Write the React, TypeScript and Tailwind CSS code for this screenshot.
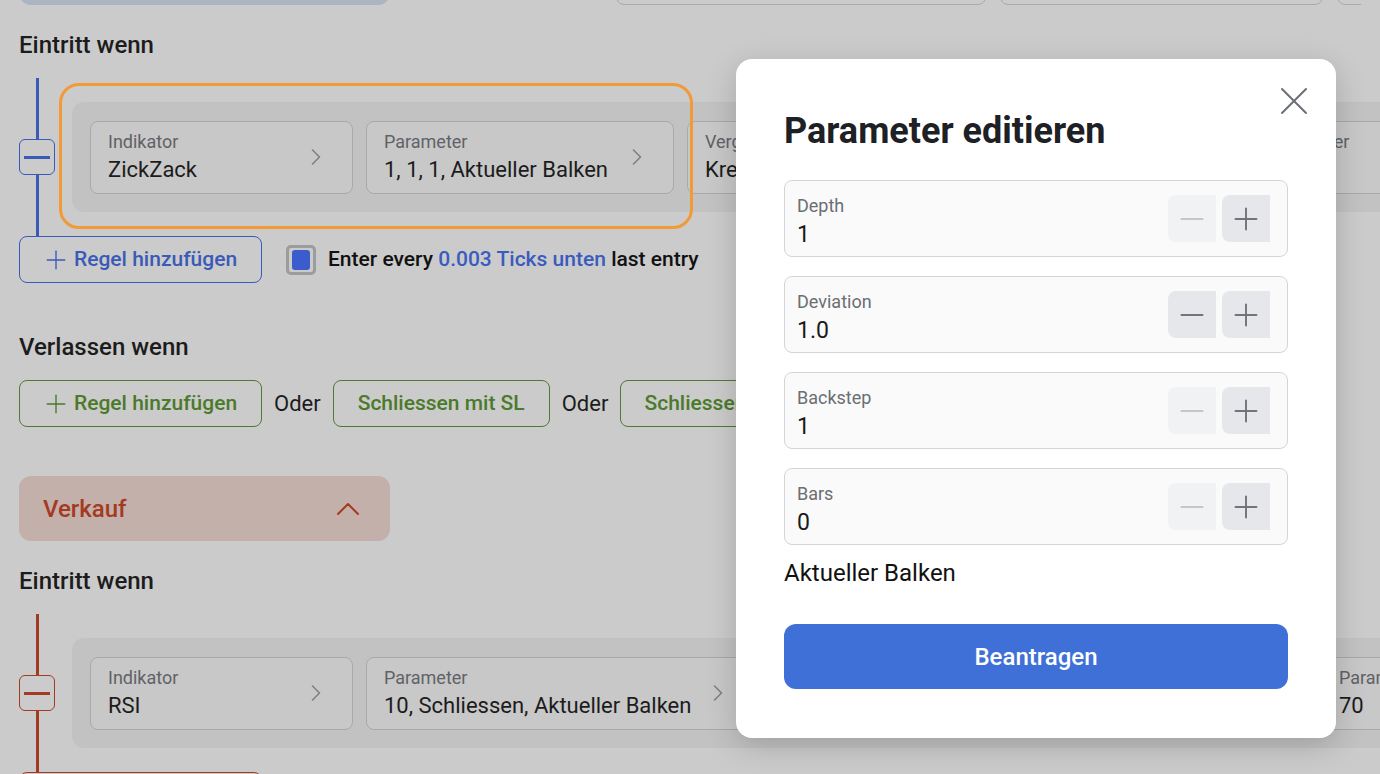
import { ChevronRight, ChevronUp, Minus, Plus, X } from 'lucide-react';

const font = "font-['Roboto','Liberation_Sans',sans-serif]";

interface CardProps {
  label: string;
  value: string;
  width: string;
}

function RuleCard({ label, value, width }: CardProps) {
  return (
    <div
      className={`flex h-[73px] shrink-0 items-center justify-between rounded-[8px] border border-[#a9a9a9] bg-[#c8c8c8] pl-[17px] pr-[22px] ${width}`}
    >
      <div className="flex flex-col">
        <span className="text-[18px] leading-[22px] text-[#606266]">{label}</span>
        <span className="mt-[3px] whitespace-nowrap text-[22px] leading-[28px] text-[#1c1c1c]">{value}</span>
      </div>
      <ChevronRight className="h-[28px] w-[28px] shrink-0 text-[#7e8085]" strokeWidth={1.4} />
    </div>
  );
}

function RuleRow({ color, cards, highlight }: { color: string; cards: CardProps[]; highlight?: boolean }) {
  const lineColor = color === 'blue' ? 'bg-[#3a5ab8]' : 'bg-[#a33a22]';
  const boxBorder = color === 'blue' ? 'border-[#3a5ab8]' : 'border-[#a33a22]';
  return (
    <div className="relative flex h-[158px] items-center">
      <div className="flex h-full w-[36px] shrink-0 flex-col items-center">
        <div className={`w-[3px] flex-1 ${lineColor}`} />
        <div className={`flex h-[36px] w-[36px] items-center justify-center rounded-[6px] border ${boxBorder}`}>
          <div className={`h-[3px] w-[26px] ${lineColor}`} />
        </div>
        <div className={`w-[3px] flex-1 ${lineColor}`} />
      </div>
      <div className="ml-[17px] flex h-[110px] shrink-0 items-center gap-[13px] rounded-l-[12px] bg-[#c2c2c2] pl-[18px]">
        {cards.map((c) => (
          <RuleCard key={c.label + c.value} {...c} />
        ))}
      </div>
      {highlight && (
        <div className="absolute left-[40px] top-[5px] h-[146px] w-[634px] rounded-[20px] border-[3px] border-[#f29a38]" />
      )}
    </div>
  );
}

function OutlineButton({
  children,
  tone,
  width,
  withIcon,
}: {
  children: React.ReactNode;
  tone: 'blue' | 'green';
  width: string;
  withIcon?: boolean;
}) {
  const cls =
    tone === 'blue'
      ? 'border-[#3a5ab8] text-[#3a5ab8]'
      : 'border-[#4f7a30] text-[#4a7a2a]';
  return (
    <div
      className={`flex h-[47px] shrink-0 items-center rounded-[8px] border text-[21px] font-medium ${cls} ${width} ${
        withIcon ? 'justify-start gap-[3px] pl-[21px]' : 'justify-center'
      }`}
    >
      {withIcon && <Plus className="h-[30px] w-[30px] shrink-0" strokeWidth={1.1} />}
      {children}
    </div>
  );
}

interface FieldProps {
  label: string;
  value: string;
  canDecrease: boolean;
}

function NumberField({ label, value, canDecrease }: FieldProps) {
  return (
    <div className="flex h-[77px] items-start justify-between rounded-[8px] border border-[#d5d5d7] bg-[#fafafa] pl-[12px] pr-[17px] pt-[14px]">
      <div className="flex flex-col">
        <span className="text-[18px] leading-[22px] text-[#6b6e73]">{label}</span>
        <span className="mt-[4px] text-[23px] leading-[28px] text-[#1a1a1a]">{value}</span>
      </div>
      <div className="flex gap-[6px]">
        <div
          className={`flex h-[47px] w-[48px] items-center justify-center rounded-l-[8px] ${
            canDecrease ? 'bg-[#e6e7ea] text-[#71757b]' : 'bg-[#f1f2f3] text-[#c4c6c9]'
          }`}
        >
          <Minus className="h-[36px] w-[36px]" strokeWidth={1.3} />
        </div>
        <div className="flex h-[47px] w-[48px] items-center justify-center rounded-l-[8px] bg-[#e6e7ea] text-[#71757b]">
          <Plus className="h-[36px] w-[36px]" strokeWidth={1.3} />
        </div>
      </div>
    </div>
  );
}

const buyCards: CardProps[] = [
  { label: 'Indikator', value: 'ZickZack', width: 'w-[263px]' },
  { label: 'Parameter', value: '1, 1, 1, Aktueller Balken', width: 'w-[308px]' },
  { label: 'Vergleich', value: 'Kreuzt nach oben', width: 'w-[300px]' },
  { label: 'Indikator', value: 'Preis', width: 'w-[235px]' },
  { label: 'Parameter', value: '14', width: 'w-[260px]' },
];

const sellCards: CardProps[] = [
  { label: 'Indikator', value: 'RSI', width: 'w-[263px]' },
  { label: 'Parameter', value: '10, Schliessen, Aktueller Balken', width: 'w-[389px]' },
  { label: 'Vergleich', value: 'Kreuzt nach unten', width: 'w-[290px]' },
  { label: 'Indikator', value: 'Wert', width: 'w-[237px]' },
  { label: 'Parameter', value: '70', width: 'w-[260px]' },
];

const fields: FieldProps[] = [
  { label: 'Depth', value: '1', canDecrease: false },
  { label: 'Deviation', value: '1.0', canDecrease: true },
  { label: 'Backstep', value: '1', canDecrease: false },
  { label: 'Bars', value: '0', canDecrease: false },
];

export default function App() {
  return (
    <div className={`relative h-[774px] w-[1380px] overflow-hidden bg-[#cbcbcb] ${font}`}>
      <div className="flex flex-col px-[19px]">
        <div className="flex h-[5px] items-end overflow-hidden">
          <div className="h-[40px] w-[371px] shrink-0 rounded-b-[12px] bg-[#aab4c2]" />
          <div className="ml-[226px] h-[40px] w-[370px] shrink-0 rounded-b-[8px] border border-[#a9a9a9]" />
          <div className="ml-[14px] h-[40px] w-[323px] shrink-0 rounded-b-[8px] border border-[#a9a9a9]" />
          <div className="ml-[14px] h-[40px] w-[300px] shrink-0 rounded-b-[8px] border border-[#a9a9a9]" />
        </div>

        <h2 className="mt-[26px] text-[24px] font-medium leading-[28px] text-[#1c1c1c]">Eintritt wenn</h2>
        <div className="mt-[19px]">
          <RuleRow color="blue" cards={buyCards} highlight />
        </div>
        <div className="flex items-center">
          <OutlineButton tone="blue" width="w-[243px]" withIcon>
            Regel hinzufügen
          </OutlineButton>
          <div className="ml-[24px] flex h-[30px] w-[30px] items-center justify-center rounded-[5px] border-[3px] border-[#9c9c9c]">
            <div className="h-[20px] w-[18px] rounded-[3px] bg-[#3a5ccc]" />
          </div>
          <span className="ml-[12px] text-[21px] font-medium text-[#111]">
            Enter every <span className="text-[#3a5cc0]">0.003 Ticks unten</span> last entry
          </span>
        </div>

        <h2 className="mt-[50px] text-[24px] font-medium leading-[28px] text-[#1c1c1c]">Verlassen wenn</h2>
        <div className="mt-[19px] flex items-center">
          <OutlineButton tone="green" width="w-[243px]" withIcon>
            Regel hinzufügen
          </OutlineButton>
          <span className="mx-[12px] text-[22px] text-[#1c1c1c]">Oder</span>
          <OutlineButton tone="green" width="w-[217px]">Schliessen mit SL</OutlineButton>
          <span className="mx-[12px] text-[22px] text-[#1c1c1c]">Oder</span>
          <OutlineButton tone="green" width="w-[217px]">Schliessen mit TP</OutlineButton>
        </div>

        <div className="mt-[49px] flex h-[65px] w-[371px] items-center justify-between rounded-[12px] bg-[#c4b0aa] pl-[24px] pr-[22px]">
          <span className="text-[24px] font-medium text-[#a33a22]">Verkauf</span>
          <ChevronUp className="h-[40px] w-[40px] text-[#a33a22]" strokeWidth={1.2} />
        </div>

        <h2 className="mt-[26px] text-[24px] font-medium leading-[28px] text-[#1c1c1c]">Eintritt wenn</h2>
        <div className="mt-[19px]">
          <RuleRow color="red" cards={sellCards} />
        </div>
        <div className="flex h-[47px] w-[243px] rounded-[8px] border border-[#a33a22]" />
      </div>

      <div className="absolute left-[736px] top-[59px] w-[600px] rounded-[16px] bg-white px-[48px] pb-[49px] pt-[52px] shadow-[0_8px_30px_rgba(0,0,0,0.18)]">
        <button className="absolute right-[18px] top-[18px] text-[#6b7078]">
          <X className="h-[48px] w-[48px]" strokeWidth={1} />
        </button>
        <h1 className="text-[36px] font-bold leading-[40px] text-[#1d2024]">Parameter editieren</h1>
        <div className="mt-[29px] flex flex-col gap-[19px]">
          {fields.map((f) => (
            <NumberField key={f.label} {...f} />
          ))}
        </div>
        <p className="mt-[14px] text-[24px] leading-[28px] text-[#111]">Aktueller Balken</p>
        <button className="mt-[37px] flex h-[65px] w-full items-center justify-center rounded-[12px] bg-[#3f70d8] text-[24px] font-medium text-white">
          Beantragen
        </button>
      </div>
    </div>
  );
}
